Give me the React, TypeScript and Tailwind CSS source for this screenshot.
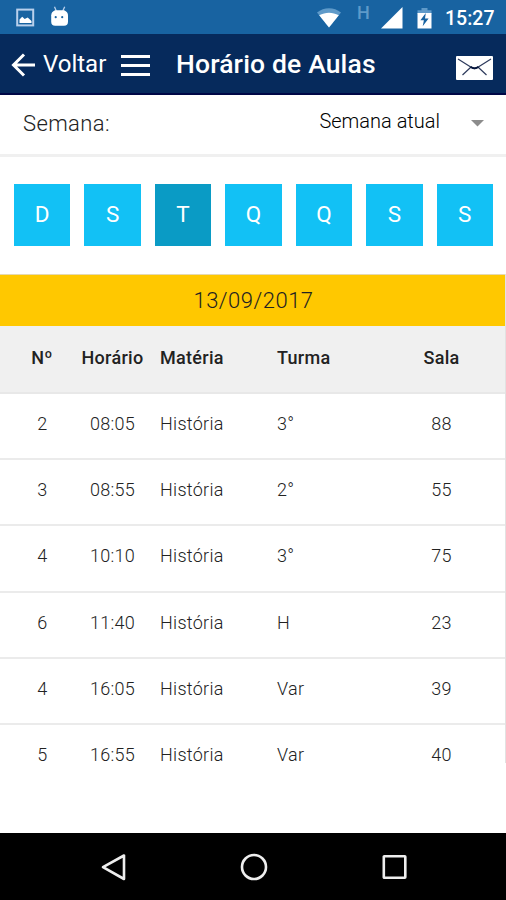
const days = [
  { id: 'dom', label: 'D' },
  { id: 'seg', label: 'S' },
  { id: 'ter', label: 'T', active: true },
  { id: 'qua', label: 'Q' },
  { id: 'qui', label: 'Q' },
  { id: 'sex', label: 'S' },
  { id: 'sab', label: 'S' },
]

const lessons = [
  { n: 2, time: '08:05', subject: 'História', group: '3°', room: 88 },
  { n: 3, time: '08:55', subject: 'História', group: '2°', room: 55 },
  { n: 4, time: '10:10', subject: 'História', group: '3°', room: 75 },
  { n: 6, time: '11:40', subject: 'História', group: 'H', room: 23 },
  { n: 4, time: '16:05', subject: 'História', group: 'Var', room: 39 },
  { n: 5, time: '16:55', subject: 'História', group: 'Var', room: 40 },
]

function StatusBar() {
  return (
    <div className="flex h-[34px] shrink-0 items-center bg-[#1863a1] pl-4 pr-[11px] text-white">
      <svg width="19" height="19" viewBox="0 0 19 19" fill="none">
        <rect x="1.2" y="1.6" width="16" height="15.8" stroke="#b9d0ec" strokeWidth="2" />
        <path d="M3.5 15V11.5l2.7-2.8 2.5 2.3 3-1.5 3.8 3.5v2z" fill="#fff" />
      </svg>
      <svg className="-mt-0.5 ml-[15px]" width="20" height="21" viewBox="0 0 20 21">
        <path d="M4.5.8 6.3 5M14.7.8 12.8 5" stroke="#b9d0ec" strokeWidth="1.3" />
        <path
          d="M5 4.2h9.2c2.4 1 3.8 2.7 3.8 5v6.6a4 4 0 0 1-4 4H5.2a4 4 0 0 1-4-4V9.2c0-2.3 1.4-4 3.8-5z"
          fill="#fff"
        />
        <circle cx="5.7" cy="11.2" r="1.1" fill="#1863a1" />
        <circle cx="12.2" cy="11.2" r="1.1" fill="#1863a1" />
      </svg>
      <div className="ml-auto flex items-center">
        <svg className="mt-px" width="24" height="20" viewBox="0 0 24 20">
          <path d="M0 4.5C7-1.2 17-1.2 24 4.5L12 19.5z" fill="#5f9ac9" />
          <path d="M2.2 7.200C8.500 3.800 15.500 3.800 21.800 7.200L12 19.500z" fill="#fff" />
        </svg>
        <span className="-mt-2 ml-4 w-[13px] text-[18px] font-medium leading-none text-[#5f9ac9]">H</span>
        <svg className="ml-[11px] mt-0.5" width="22" height="22" viewBox="0 0 22 22">
          <path d="M21.5 0v21.500H0z" fill="#fff" />
        </svg>
        <svg className="ml-[14px] mt-0.5" width="15" height="21" viewBox="0 0 15 21">
          <path d="M4.500 0h6v2.200h4V6H.500V2.200h4z" fill="#5f9ac9" />
          <path d="M.500 5h14v15.500H.500z" fill="#fff" />
          <path d="M8.800 5 3.400 12.300h3.500L5.700 18.300l5.900-7.800H8z" fill="#1863a1" />
        </svg>
        <span className="ml-[13px] mt-[3px] w-[50px] whitespace-nowrap text-[19.5px] font-medium leading-none">15:27</span>
      </div>
    </div>
  )
}

function Header() {
  return (
    <header className="flex h-[61px] shrink-0 items-center border-b-2 border-[#000746] bg-[#062a5c] pl-[11px] pr-[13px] text-white">
      <svg className="mt-[3px]" width="25" height="24" viewBox="0 0 25 24" fill="none" stroke="#fff" strokeWidth="3">
        <path d="M24 12H2.5M13 1.5 2.5 12 13 22.5" />
      </svg>
      <span className="ml-[7px] mt-px w-[64px] whitespace-nowrap text-[24px] leading-none">Voltar</span>
      <svg className="ml-[14px] mt-[5px]" width="29" height="22" viewBox="0 0 29 22" fill="#fff">
        <path d="M0 0h29v3H0zM0 9h29v3H0zM0 18h29v3H0z" />
      </svg>
      <h1 className="ml-[26px] mt-px whitespace-nowrap text-[26.5px] font-medium leading-none tracking-[0.15px]">
        Horário de Aulas
      </h1>
      <svg className="ml-auto mt-[9px]" width="37" height="24" viewBox="0 0 37 24" fill="none">
        <rect width="37" height="24" rx="1" fill="#fff" />
        <path
          d="M2 3l13.5 8.5c2 1.4 4 1.4 6 0L35 3M6.5 19l8-7.5M30.5 19l-8-7.5"
          stroke="#2d3a5c"
          strokeWidth="1.2"
        />
        <path d="M14.5 10.8c3 2.2 5 2.2 8 0" stroke="#06163c" strokeWidth="2" />
      </svg>
    </header>
  )
}

function WeekSelect() {
  return (
    <div className="flex h-[62px] shrink-0 justify-between border-b-[3px] border-[#f0f0f0] pl-[23px] pr-[22px]">
      <span className="mt-[17px] text-[22px] font-light leading-[24px] tracking-[0.4px] text-[#222]">Semana:</span>
      <div className="flex">
        <span className="mt-[14px] text-[20px] font-light leading-[24px] text-black">Semana atual</span>
        <svg className="ml-[31px] mt-[25px]" width="13" height="7" viewBox="0 0 13 7">
          <path d="M0 0h13L6.5 6.5z" fill="#8c8c8c" />
        </svg>
      </div>
    </div>
  )
}

function DayPicker() {
  return (
    <div className="flex h-[117px] shrink-0 gap-[14px] pl-[14px] pr-[13px] pt-[27px]">
      {days.map((day) => (
        <button
          key={day.id}
          className={`h-[62px] flex-1 text-[22.5px] text-white ${day.active ? 'bg-[#0a9bc5]' : 'bg-[#12c1f5]'}`}
        >
          {day.label}
        </button>
      ))}
    </div>
  )
}

function Timetable() {
  return (
    <section className="shrink-0 border-r border-[#e2e2e2] text-[#222]">
      <div className="h-[52px] border-t border-[#e5d9b0] bg-[#ffc800] pl-0.5 text-center text-[22px] font-light leading-[51px] tracking-[0.5px]">
        13/09/2017
      </div>
      <div className="grid h-[68px] grid-cols-[80px_65px_132px_100px_1fr] items-center border-b-2 border-[#e8e8e8] bg-[#f0f0f0] pb-[3px] text-[18px] font-medium tracking-[0.3px]">
        <span className="pl-1 text-center">Nº</span>
        <span className="text-center">Horário</span>
        <span className="pl-[15px]">Matéria</span>
        <span>Turma</span>
        <span className="pl-px text-center">Sala</span>
      </div>
      {lessons.map((lesson) => (
        <div
          key={lesson.time}
          className="grid h-[66.2px] grid-cols-[80px_65px_132px_100px_1fr] items-start border-b-2 border-[#ebebeb] pt-4 text-[18px] font-light leading-[27px] tracking-[0.3px] last:h-[38px] last:border-b-0 last:pb-0"
        >
          <span className="pl-[5px] text-center">{lesson.n}</span>
          <span className="text-center">{lesson.time}</span>
          <span className="pl-[15px]">{lesson.subject}</span>
          <span>{lesson.group}</span>
          <span className="pl-px text-center">{lesson.room}</span>
        </div>
      ))}
    </section>
  )
}

function NavBar() {
  return (
    <nav className="mt-auto flex h-[67px] shrink-0 items-center justify-center gap-[113px] bg-black pl-px">
      <svg width="28" height="28" viewBox="0 0 28 28" fill="none" stroke="#eee" strokeWidth="2.6">
        <path d="M25 2.5v23.5L4 14.200z" strokeLinejoin="round" />
      </svg>
      <svg width="28" height="28" viewBox="0 0 28 28" fill="none" stroke="#eee" strokeWidth="2.6">
        <circle cx="14" cy="14" r="12" />
      </svg>
      <svg width="28" height="28" viewBox="0 0 28 28" fill="none" stroke="#eee" strokeWidth="2.6">
        <rect x="2.800" y="3.300" width="21.500" height="21.500" rx="0.500" />
      </svg>
    </nav>
  )
}

export default function App() {
  return (
    <div className="flex h-[900px] w-[506px] flex-col overflow-hidden bg-white font-[Roboto,sans-serif]">
      <StatusBar />
      <Header />
      <WeekSelect />
      <DayPicker />
      <Timetable />
      <NavBar />
    </div>
  )
}
